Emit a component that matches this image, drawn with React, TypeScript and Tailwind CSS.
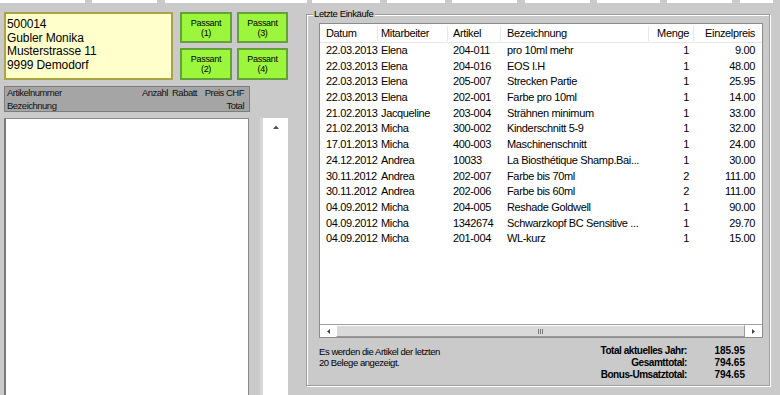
import React from "react";

const rows: [string, string, string, string, string, string][] = [
  ["22.03.2013", "Elena", "204-011", "pro 10ml mehr", "1", "9.00"],
  ["22.03.2013", "Elena", "204-016", "EOS I.H", "1", "48.00"],
  ["22.03.2013", "Elena", "205-007", "Strecken Partie", "1", "25.95"],
  ["22.03.2013", "Elena", "202-001", "Farbe pro 10ml", "1", "14.00"],
  ["21.02.2013", "Jacqueline", "203-004", "Strähnen minimum", "1", "33.00"],
  ["21.02.2013", "Micha", "300-002", "Kinderschnitt 5-9", "1", "32.00"],
  ["17.01.2013", "Micha", "400-003", "Maschinenschnitt", "1", "24.00"],
  ["24.12.2012", "Andrea", "10033", "La Biosthétique Shamp.Bai...", "1", "30.00"],
  ["30.11.2012", "Andrea", "202-007", "Farbe bis 70ml", "2", "111.00"],
  ["30.11.2012", "Andrea", "202-006", "Farbe bis 60ml", "2", "111.00"],
  ["04.09.2012", "Micha", "204-005", "Reshade Goldwell", "1", "90.00"],
  ["04.09.2012", "Micha", "1342674", "Schwarzkopf BC Sensitive ...", "1", "29.70"],
  ["04.09.2012", "Micha", "201-004", "WL-kurz", "1", "15.00"],
];

const topSegs = [
  [0, 85],
  [92, 157],
  [165, 307],
  [312, 380],
  [387, 445],
  [452, 517],
  [525, 590],
  [597, 660],
  [667, 732],
  [740, 773],
];

function Passant({ n }: { n: string }) {
  return (
    <div className="bg-[#9cf63c] border-2 border-[#62a236] flex flex-col items-center justify-center text-[9px] leading-[10px] tracking-[-0.3px] text-black">
      <span>Passant</span>
      <span>({n})</span>
    </div>
  );
}

export default function App() {
  return (
    <div className="w-[780px] h-[395px] overflow-hidden bg-[#cacaca] font-['Liberation_Sans',Arial,sans-serif] text-black">
      {/* top strip */}
      <div className="flex h-[3px]">
        {topSegs.map(([a, b], i) => (
          <div
            key={i}
            className="bg-white h-[3px] shrink-0"
            style={{
              width: b - a,
              marginLeft: i === 0 ? a : a - topSegs[i - 1][1],
            }}
          />
        ))}
      </div>

      <div className="flex mt-[9px]">
        {/* left column */}
        <div className="ml-[4px] w-[284px] flex flex-col">
          <div className="flex gap-[7px] h-[68px]">
            <div className="w-[169px] h-[68px] bg-[#ffffcc] border-2 border-[#a9a445] pl-[1px] pt-[4px] text-[12px] leading-[13.7px] tracking-[-0.1px]">
              <div>500014</div>
              <div>Gubler Monika</div>
              <div>Musterstrasse 11</div>
              <div>9999 Demodorf</div>
            </div>
            <div className="grid grid-cols-[52px_51px] grid-rows-[31px_32px] gap-x-[5px] gap-y-[5px]">
              <Passant n="1" />
              <Passant n="3" />
              <Passant n="2" />
              <Passant n="4" />
            </div>
          </div>

          <div className="mt-[6px] w-[246px] h-[26px] bg-[#a5a5a5] border border-[#7c7c7c] pl-[2px] pr-[5px] text-[9.5px] leading-[12px] tracking-[-0.5px] text-[#111]">
            <div className="grid grid-cols-[1fr_34px_29px_47px] pt-[0px]">
              <span>Artikelnummer</span>
              <span className="text-right">Anzahl</span>
              <span className="text-right">Rabatt</span>
              <span className="text-right">Preis CHF</span>
            </div>
            <div className="flex justify-between mt-[1px]">
              <span>Bezeichnung</span>
              <span>Total</span>
            </div>
          </div>

          <div className="mt-[6px] flex">
            <div className="w-[245px] h-[290px] bg-white border border-[#8a8a8a] border-l-2 border-l-[#7a7a7a]" />
            <div className="ml-[11px] w-[3px] h-[290px] bg-[#d8d8d8]" />
            <div className="w-[25px] h-[290px] bg-white flex justify-center pt-[7px]">
              <svg width="6" height="4" viewBox="0 0 6 4">
                <path d="M0 4 L3 0.5 L6 4 Z" fill="#555" />
              </svg>
            </div>
          </div>
        </div>

        {/* group box */}
        <div className="ml-[18px] mt-[2px] w-[464px] h-[372px] relative border border-[#9c9c9c] shadow-[inset_1px_1px_0_#ffffff,1px_1px_0_#ffffff] pl-[12px] pt-[8px] flex flex-col">
          <span className="absolute left-[6px] top-[-7px] px-[1px] bg-[#cacaca] text-[9.5px] leading-[12px] tracking-[-0.4px]">
            Letzte Einkäufe
          </span>

          {/* list view */}
          <div className="w-[444px] h-[315px] bg-white border border-[#8c8c8c] flex flex-col text-[11px] tracking-[-0.35px]">
            <div className="grid grid-cols-[58px_70px_53px_148px_45px_68px] h-[19px] leading-[19px] border-b border-[#e6e6e6]">
              <span className="pl-[6px] border-r border-[#e8e8e8] my-[2px] leading-[15px]">Datum</span>
              <span className="pl-[3px] border-r border-[#e8e8e8] my-[2px] leading-[15px]">Mitarbeiter</span>
              <span className="pl-[5px] border-r border-[#e8e8e8] my-[2px] leading-[15px]">Artikel</span>
              <span className="pl-[6px] border-r border-[#e8e8e8] my-[2px] leading-[15px]">Bezeichnung</span>
              <span className="pr-[4px] text-right border-r border-[#e8e8e8] my-[2px] leading-[15px]">Menge</span>
              <span className="pr-[7px] text-right my-[2px] leading-[15px]">Einzelpreis</span>
            </div>
            {rows.map((r, i) => (
              <div key={i} className="grid grid-cols-[58px_70px_53px_148px_45px_68px] h-[15.7px] leading-[15.7px] whitespace-nowrap">
                <span className="pl-[6px]">{r[0]}</span>
                <span className="pl-[3px]">{r[1]}</span>
                <span className="pl-[5px]">{r[2]}</span>
                <span className="pl-[6px] overflow-hidden">{r[3]}</span>
                <span className="pr-[5px] text-right">{r[4]}</span>
                <span className="pr-[7px] text-right">{r[5]}</span>
              </div>
            ))}
            <div className="flex-1" />
            {/* horizontal scrollbar */}
            <div className="h-[13px] flex border-t border-[#a0a0a0]">
              <div className="w-[16px] bg-white flex items-center justify-center">
                <svg width="3" height="5" viewBox="0 0 3 5">
                  <path d="M3 0 L0 2.5 L3 5 Z" fill="#444" />
                </svg>
              </div>
              <div className="flex-1 bg-[#dadada] border-t border-l border-white border-b border-r border-b-[#9a9a9a] border-r-[#9a9a9a] flex items-center justify-center">
                <div className="flex gap-[1px]">
                  <div className="w-[1px] h-[5px] bg-[#7a7a7a]" />
                  <div className="w-[1px] h-[5px] bg-[#7a7a7a]" />
                  <div className="w-[1px] h-[5px] bg-[#7a7a7a]" />
                </div>
              </div>
              <div className="w-[17px] bg-white flex items-center justify-center">
                <svg width="3" height="5" viewBox="0 0 3 5">
                  <path d="M0 0 L3 2.5 L0 5 Z" fill="#444" />
                </svg>
              </div>
            </div>
          </div>

          {/* bottom area */}
          <div className="flex justify-between w-[444px]">
            <div className="mt-[9px] text-[9.5px] leading-[10.5px] tracking-[-0.45px]">
              <div>Es werden die Artikel der letzten</div>
              <div>20 Belege angezeigt.</div>
            </div>
            <div className="mt-[7px] mr-[18px] grid grid-cols-[auto_58px] text-[10px] leading-[12px] font-bold">
              <span className="text-right tracking-[-0.45px]">Total aktuelles Jahr:</span>
              <span className="text-right">185.95</span>
              <span className="text-right tracking-[-0.45px]">Gesamttotal:</span>
              <span className="text-right">794.65</span>
              <span className="text-right tracking-[-0.45px]">Bonus-Umsatztotal:</span>
              <span className="text-right">794.65</span>
            </div>
          </div>
        </div>
      </div>
    </div>
  );
}
